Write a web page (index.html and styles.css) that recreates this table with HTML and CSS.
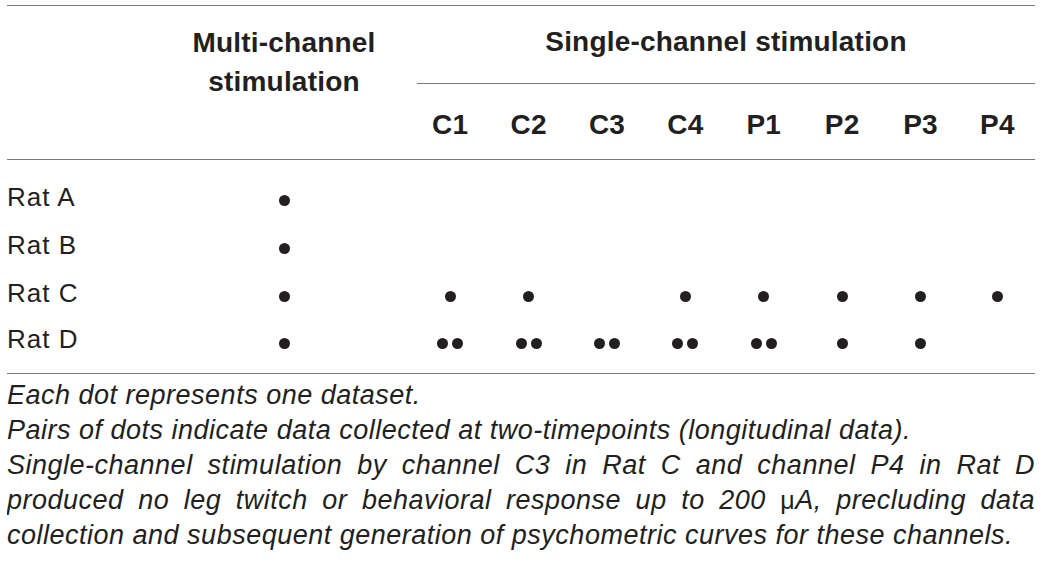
FILE: index.html
```html
<!DOCTYPE html>
<html lang="en">

<head>
  <meta charset="UTF-8">
  <title>Stimulation datasets</title>
  <link rel="stylesheet" href="styles.css">
</head>

<body>
  <table class="data-table">
    <colgroup>
      <col class="col-label">
      <col class="col-multi">
      <col class="col-ch"><col class="col-ch"><col class="col-ch"><col class="col-ch">
      <col class="col-ch"><col class="col-ch"><col class="col-ch"><col class="col-last">
    </colgroup>
    <thead>
      <tr class="head-top">
        <th></th>
        <th rowspan="2" class="multi-head">Multi-channel<br>stimulation</th>
        <th colspan="8" class="single-head"><div class="single-title">Single-channel stimulation</div></th>
      </tr>
      <tr class="head-channels">
        <th></th>
        <th>C1</th><th>C2</th><th>C3</th><th>C4</th>
        <th>P1</th><th>P2</th><th>P3</th><th>P4</th>
      </tr>
    </thead>
    <tbody>
      <tr class="first-row">
        <td class="rat">Rat A</td>
        <td><span class="dot"></span></td>
        <td></td><td></td><td></td><td></td><td></td><td></td><td></td><td></td>
      </tr>
      <tr>
        <td class="rat">Rat B</td>
        <td><span class="dot"></span></td>
        <td></td><td></td><td></td><td></td><td></td><td></td><td></td><td></td>
      </tr>
      <tr>
        <td class="rat">Rat C</td>
        <td><span class="dot"></span></td>
        <td><span class="dot"></span></td>
        <td><span class="dot"></span></td>
        <td></td>
        <td><span class="dot"></span></td>
        <td><span class="dot"></span></td>
        <td><span class="dot"></span></td>
        <td><span class="dot"></span></td>
        <td><span class="dot"></span></td>
      </tr>
      <tr class="last-row">
        <td class="rat">Rat D</td>
        <td><span class="dot"></span></td>
        <td><span class="dot"></span><span class="dot"></span></td>
        <td><span class="dot"></span><span class="dot"></span></td>
        <td><span class="dot"></span><span class="dot"></span></td>
        <td><span class="dot"></span><span class="dot"></span></td>
        <td><span class="dot"></span><span class="dot"></span></td>
        <td><span class="dot"></span></td>
        <td><span class="dot"></span></td>
        <td></td>
      </tr>
    </tbody>
  </table>

  <div class="notes">
    <p>Each dot represents one dataset.</p>
    <p>Pairs of dots indicate data collected at two-timepoints (longitudinal data).</p>
    <p>
      <span class="line full">Single-channel stimulation by channel C3 in Rat C and channel P4 in Rat D</span>
      <span class="line full">produced no leg twitch or behavioral response up to 200 <span class="mu">&mu;</span>A, precluding data</span>
      <span class="line">collection and subsequent generation of psychometric curves for these channels.</span>
    </p>
  </div>
</body>

</html>
```

FILE: styles.css
```css
body {
  margin: 5px 6px 0 7px;
  background: #fff;
  color: #231f20;
  font-family: "Liberation Sans", Arial, sans-serif;
}

.data-table {
  width: 1028px;
  border-collapse: collapse;
  table-layout: fixed;
  border-top: 1px solid #7a7a7a;
  border-bottom: 1px solid #7a7a7a;
}

.col-label {
  width: 150px;
}

.col-multi {
  width: 254px;
}

.col-ch {
  width: 78.4px;
}

.col-last {
  width: 75.2px;
}

th {
  font-weight: bold;
  font-size: 28px;
  letter-spacing: 0.2px;
  text-align: center;
  padding: 0;
}

.head-top {
  height: 78px;
}

.multi-head {
  vertical-align: top;
  line-height: 39px;
  padding-top: 17px;
}

.single-head {
  vertical-align: bottom;
}

.single-title {
  margin-left: 6px;
  padding-bottom: 25px;
  border-bottom: 1px solid #7a7a7a;
}

.head-channels {
  height: 76px;
  border-bottom: 1px solid #7a7a7a;
}

.head-channels th {
  padding-top: 8px;
}

tbody tr {
  height: 48px;
}

tbody tr.first-row {
  height: 63px;
}

tbody tr.last-row {
  height: 55px;
}

td {
  padding: 0;
  text-align: center;
  vertical-align: middle;
  font-size: 26px;
  line-height: 30px;
}

.first-row td {
  padding-top: 15px;
}

.last-row td {
  padding-bottom: 9px;
}

td.rat {
  text-align: left;
  letter-spacing: 1px;
  padding-bottom: 4px;
}

.first-row td.rat {
  padding-bottom: 0;
  padding-top: 11px;
}

.last-row td.rat {
  padding-bottom: 13px;
}

.dot {
  display: inline-block;
  width: 11px;
  height: 11px;
  border-radius: 50%;
  background: #231f20;
  margin: 0 2px;
  vertical-align: middle;
}

.notes {
  width: 1028px;
  font-style: italic;
  font-size: 27px;
  letter-spacing: 0.5px;
  line-height: 35px;
  padding-top: 4px;
}

.notes p {
  margin: 0;
}

.line {
  display: block;
}

.full {
  text-align: justify;
  text-align-last: justify;
}

.mu {
  font-style: normal;
  font-size: 25px;
}
```
